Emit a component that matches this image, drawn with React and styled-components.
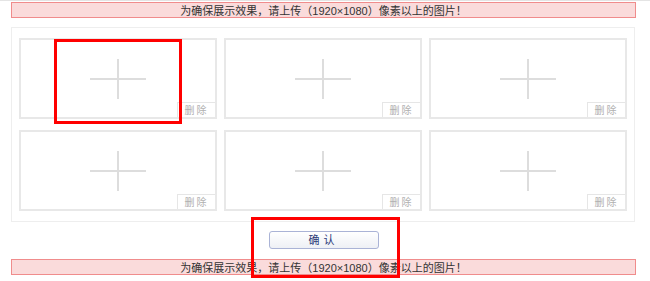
import React from 'react'
import styled, { createGlobalStyle } from 'styled-components'

const GlobalStyle = createGlobalStyle`
    html, body {
        margin: 0;
        padding: 0;
        background: #fff;
    }
    body {
        font-family: "Liberation Sans", "Noto Sans CJK SC", sans-serif;
    }
`

const Page = styled.div`
    position: relative;
    width: 650px;
    height: 281px;
    overflow: hidden;
    padding: 1px 14px 0 11px;
    box-sizing: border-box;
    border-top: 1px solid #e4e4e4;
`

const Notice = styled.div`
    height: 16px;
    line-height: 16px;
    background: #fadbdb;
    border: 1px solid #f08c8c;
    color: #333;
    font-size: 11px;
    text-align: center;
    box-sizing: border-box;
    margin-top: ${props => props.top || 0}px;
`

const Panel = styled.div`
    margin-top: 9px;
    width: 624px;
    box-sizing: border-box;
    border: 1px solid #eeeeee;
    padding: 10px 6px 10px 7px;
    display: grid;
    grid-template-columns: repeat(3, 198px);
    column-gap: 7px;
    row-gap: 11px;
`

const Card = styled.div`
    position: relative;
    height: 81px;
    box-sizing: border-box;
    border: 2px solid #e8e8e8;
    display: flex;
    align-items: center;
    justify-content: center;
`

const Plus = styled.div`
    position: relative;
    width: 56px;
    height: 40px;
    &::before, &::after {
        content: '';
        position: absolute;
        background: #dddddd;
    }
    &::before {
        left: 0;
        right: 0;
        top: 19px;
        height: 2px;
    }
    &::after {
        top: 0;
        bottom: 0;
        left: 27px;
        width: 2px;
    }
`

const DeleteBtn = styled.div`
    position: absolute;
    right: 0;
    bottom: 0;
    width: 38px;
    height: 15px;
    line-height: 15px;
    box-sizing: border-box;
    border-top: 1px solid #e6e6e6;
    border-left: 1px solid #e6e6e6;
    background: #fff;
    color: #b0b0b0;
    font-size: 10px;
    text-align: center;
    letter-spacing: 2px;
`

const Actions = styled.div`
    display: flex;
    justify-content: center;
    padding: 9px 0 10px;
`

const ConfirmBtn = styled.button`
    width: 110px;
    height: 18px;
    border: 1px solid #aab3d6;
    border-radius: 3px;
    background: linear-gradient(#ffffff, #eef0f5);
    color: #2b3a78;
    font-family: "Liberation Sans", "Noto Sans CJK SC", sans-serif;
    font-size: 11px;
    letter-spacing: 4px;
    padding: 0;
    line-height: 16px;
`

const Highlight = styled.div`
    position: absolute;
    border: 3px solid #ff0000;
    box-sizing: border-box;
    left: ${props => props.x}px;
    top: ${props => props.y}px;
    width: ${props => props.w}px;
    height: ${props => props.h}px;
    pointer-events: none;
`

const noticeText = '为确保展示效果，请上传（1920×1080）像素以上的图片！'

const App = () => {
    const slots = [1, 2, 3, 4, 5, 6]
    return (
        <>
            <GlobalStyle />
            <Page>
                <Notice>{noticeText}</Notice>
                <Panel>
                    {slots.map(id => (
                        <Card key={id}>
                            <Plus />
                            <DeleteBtn>删除</DeleteBtn>
                        </Card>
                    ))}
                </Panel>
                <Actions>
                    <ConfirmBtn>确认</ConfirmBtn>
                </Actions>
                <Notice>{noticeText}</Notice>
                <Highlight x={54} y={38} w={128} h={85} />
                <Highlight x={251} y={216} w={149} h={61} />
            </Page>
        </>
    )
}

export default App
